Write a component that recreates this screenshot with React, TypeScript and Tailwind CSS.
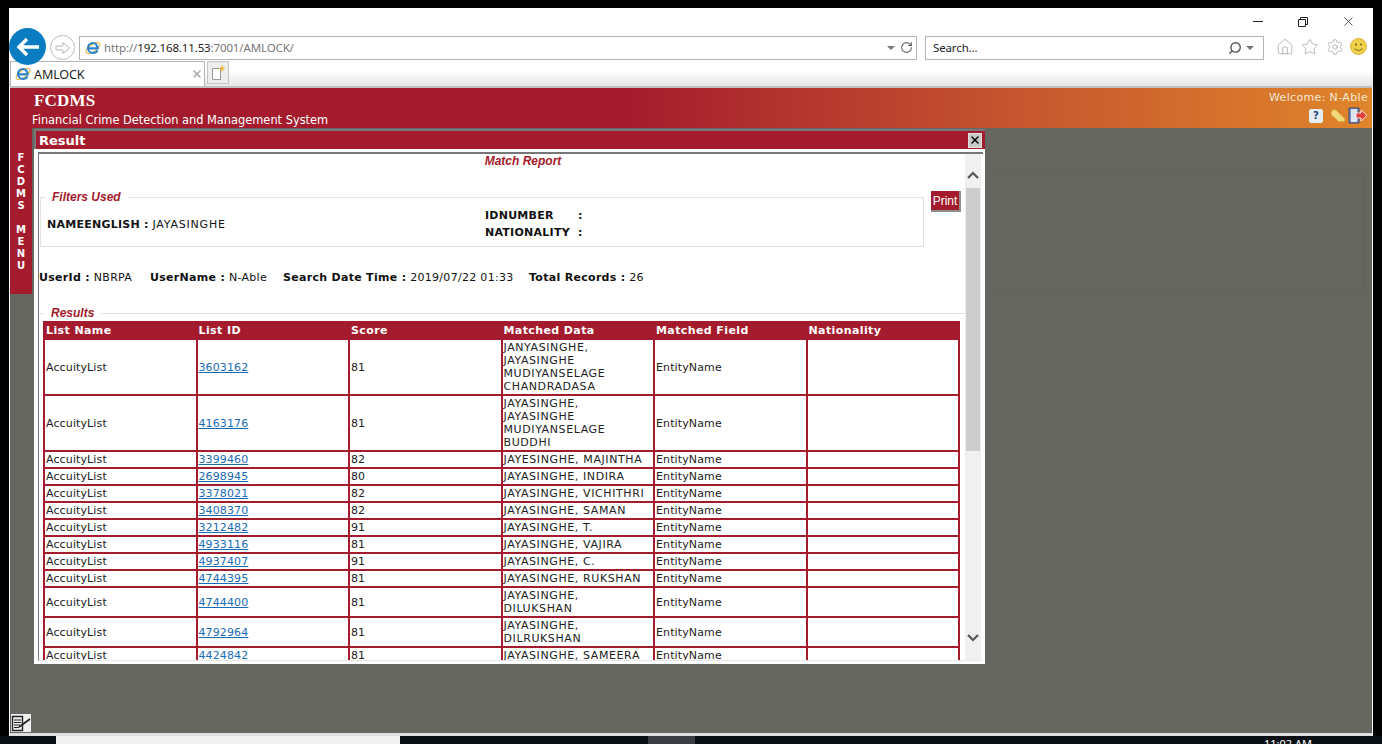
import { Home, RotateCw, Search, Settings, Star, X } from "lucide-react";

const rows: { id: string; score: string; data: string[] }[] = [
  { id: "3603162", score: "81", data: ["JANYASINGHE,", "JAYASINGHE", "MUDIYANSELAGE", "CHANDRADASA"] },
  { id: "4163176", score: "81", data: ["JAYASINGHE,", "JAYASINGHE", "MUDIYANSELAGE", "BUDDHI"] },
  { id: "3399460", score: "82", data: ["JAYESINGHE, MAJINTHA"] },
  { id: "2698945", score: "80", data: ["JAYASINGHE, INDIRA"] },
  { id: "3378021", score: "82", data: ["JAYASINGHE, VICHITHRI"] },
  { id: "3408370", score: "82", data: ["JAYASINGHE, SAMAN"] },
  { id: "3212482", score: "91", data: ["JAYASINGHE, T."] },
  { id: "4933116", score: "81", data: ["JAYASINGHE, VAJIRA"] },
  { id: "4937407", score: "91", data: ["JAYASINGHE, C."] },
  { id: "4744395", score: "81", data: ["JAYASINGHE, RUKSHAN"] },
  { id: "4744400", score: "81", data: ["JAYASINGHE,", "DILUKSHAN"] },
  { id: "4792964", score: "81", data: ["JAYASINGHE,", "DILRUKSHAN"] },
  { id: "4424842", score: "81", data: ["JAYASINGHE, SAMEERA"] },
];

const headers = ["List Name", "List ID", "Score", "Matched Data", "Matched Field", "Nationality"];

function IeLogo({ size = 16 }: { size?: number }) {
  return (
    <svg width={size} height={size} viewBox="0 0 16 16" className="shrink-0">
      <ellipse cx="8" cy="8" rx="8" ry="3.6" transform="rotate(-35 8 8)" fill="none" stroke="#e8b33a" strokeWidth="1.1" />
      <path
        d="M3.2 8.400h9.400c0-3.300-2-5.400-4.600-5.400C5.200 3 3 5.200 3 8s2.200 5 5.100 5c2 0 3.600-1 4.300-2.600"
        fill="none"
        stroke="#2b84c9"
        strokeWidth="2.200"
      />
    </svg>
  );
}

function Caret() {
  return <div className="h-0 w-0 border-x-[4px] border-t-[4px] border-x-transparent border-t-[#777]" />;
}

function CaptionButtons() {
  return (
    <div className="flex h-[26px] shrink-0 items-center justify-end pr-[17px] pt-[1px]">
      <div className="h-[1px] w-[10px] bg-[#222]" />
      <svg width="10" height="10" viewBox="0 0 10 10" className="ml-[35px]" fill="none" stroke="#222">
        <path d="M.5 2.500h7v7h-7zM2.500 2.500v-2h7v7h-2" />
      </svg>
      <X size={15} strokeWidth={1.2} className="ml-[33px] text-[#222]" />
    </div>
  );
}

function AddressRow() {
  return (
    <div className="flex h-[27px] shrink-0 items-center">
      <div className="relative z-10 -my-[6px] flex h-[37px] w-[37px] shrink-0 -translate-y-[1px] items-center justify-center rounded-full bg-[#0a7cc1]">
        <svg width="24" height="20" viewBox="0 0 24 20" fill="none" stroke="#fff" strokeWidth="3.400">
          <path d="M11 2 3 10l8 8M3 10h20" />
        </svg>
      </div>
      <div className="ml-[4px] flex h-[25px] w-[25px] shrink-0 items-center justify-center rounded-full border border-[#bdbdbd]">
        <svg width="16" height="14" viewBox="0 0 16 14" fill="none" stroke="#b5b5b5" strokeWidth="1">
          <path d="M1 5h7V1.500L14.500 7 8 12.500V9H1z" />
        </svg>
      </div>
      <div className="ml-[4px] flex h-[24px] w-[838px] shrink-0 items-center border border-[#b4b4b4] pl-[5px] pr-[3px] text-[11.5px] tracking-[-0.13px]">
        <IeLogo />
        <span className="ml-[3px] text-[#777]">
          http://<span className="text-[#222]">192.168.11.53</span>:7001/AMLOCK/
        </span>
        <div className="ml-auto flex items-center">
          <Caret />
          <RotateCw size={13} strokeWidth={2} className="ml-[5px] text-[#666]" />
        </div>
      </div>
      <div className="ml-[8px] flex h-[24px] w-[339px] shrink-0 items-center border border-[#b4b4b4] pl-[7px] pr-[9px] text-[11.5px] tracking-[-0.13px] text-[#222]">
        Search...
        <Search size={14} strokeWidth={2.400} className="ml-auto -scale-x-100 text-[#555]" />
        <div className="ml-[4px]">
          <Caret />
        </div>
      </div>
      <div className="ml-[12px] flex -translate-y-[1px] items-center gap-[7px] text-[#a0a0a0]">
        <Home size={18} strokeWidth={1} />
        <Star size={18} strokeWidth={1} />
        <Settings size={18} strokeWidth={1} />
        <svg width="17" height="17" viewBox="0 0 17 17" className="ml-[-1px]">
          <circle cx="8.500" cy="8.500" r="8" fill="#f0cf4a" stroke="#d9b23c" />
          <circle cx="6" cy="6.500" r="1" fill="#6e5a16" />
          <circle cx="11" cy="6.500" r="1" fill="#6e5a16" />
          <path d="M4.500 10.500c1.500 2.400 6.500 2.400 8 0" fill="none" stroke="#6e5a16" />
        </svg>
      </div>
    </div>
  );
}

function TabRow() {
  return (
    <div className="flex h-[25px] shrink-0 bg-gradient-to-b from-white from-40% to-[#e6e6e6] pl-[1px]">
      <div className="flex h-[25px] w-[195px] items-center border border-b-0 border-[#b4b4b4] bg-white pl-[4px] pr-[1px] text-[12.5px] tracking-[-0.1px] text-[#222]">
        <IeLogo />
        <span className="ml-[3px] translate-y-[1px]">AMLOCK</span>
        <X size={12} strokeWidth={3} className="ml-auto text-[#a5a5a5]" />
      </div>
      <div className="ml-[2px] flex h-[23px] w-[22px] items-center justify-center border border-[#c4c4c4] bg-[#ededed]">
        <svg width="16" height="16" viewBox="0 0 16 16">
          <path d="M2.500 3.500h8v11h-8z" fill="#fff" stroke="#999" />
          <path d="M12 0l1 2.500 2.500 1-2.500 1-1 2.500-1-2.500-2.500-1 2.500-1z" fill="#f2b431" />
        </svg>
      </div>
    </div>
  );
}

function TopBanner() {
  return (
    <div className="flex h-[40px] shrink-0 bg-[linear-gradient(to_right,#a41b2d_0%,#a41b2d_45%,#c4522f_72%,#e0852b_100%)] font-['DejaVu_Sans',sans-serif] text-white">
      <div className="pl-[22px]">
        <div className="ml-[2px] h-[25px] pt-[2px] font-['Liberation_Serif',serif] text-[17px] font-bold leading-[22px] tracking-[0.2px]">FCDMS</div>
        <div className="text-[11.4px] leading-[14px]">Financial Crime Detection and Management System</div>
      </div>
      <div className="ml-auto flex flex-col items-end pr-[4px]">
        <div className="text-[11px] leading-[20px] tracking-[0.35px] text-[#f4e8d4]">Welcome: N-Able</div>
        <div className="-mt-[1px] flex items-center">
          <div className="flex h-[14px] w-[14px] items-center justify-center rounded-[2px] bg-[#e4eef8] text-[10px] font-bold leading-none text-[#1c3f7a]">?</div>
          <svg width="16" height="16" viewBox="0 0 16 16" className="ml-[7px]">
            <path d="M1 4l3-3 3 2 8 8-1 3-2-1-1 1-1-1-1 1-5-5-2-1z" fill="#f0d878" stroke="#d6a832" strokeWidth=".8" />
          </svg>
          <svg width="20" height="17" viewBox="0 0 20 17" className="ml-[2px]">
            <path d="M1 1h10v15H1z" fill="#7d8fc0" stroke="#39456f" />
            <path d="M3 2h6v13H3z" fill="#dfe4f2" />
            <path d="M8 6h5V3l6 5.500-6 5.500v-3H8z" fill="#e2403a" stroke="#fff" strokeWidth=".8" />
          </svg>
        </div>
      </div>
    </div>
  );
}

function SideMenu() {
  const letters = ["F", "C", "D", "M", "S", "\u00a0", "M", "E", "N", "U"];
  return (
    <div className="flex h-[166px] w-[22px] shrink-0 flex-col items-center bg-[#a41b2d] pt-[24px] text-[10px] font-bold leading-[12px] text-white">
      {letters.map((l, i) => (
        <span key={i}>{l}</span>
      ))}
    </div>
  );
}

function Scrollbar() {
  return (
    <div className="flex w-[16px] shrink-0 flex-col items-center bg-[#f0f0f0]">
      <svg width="12" height="8" viewBox="0 0 12 8" className="mb-[9px] mt-[17px] shrink-0" fill="none" stroke="#555" strokeWidth="2.200">
        <path d="M1 7l5-5 5 5" />
      </svg>
      <div className="h-[263px] w-[14px] shrink-0 bg-[#cdcdcd]" />
      <svg width="12" height="8" viewBox="0 0 12 8" className="mb-[18px] mt-auto shrink-0" fill="none" stroke="#555" strokeWidth="2.200">
        <path d="M1 1l5 5 5-5" />
      </svg>
    </div>
  );
}

function ReportTable() {
  const cell = "border-2 border-[#a41b2d] px-[1px] py-[1px] align-middle font-normal";
  return (
    <table className="ml-[3px] mt-[1px] w-[917px] table-fixed border-collapse text-[11px] leading-[13px] tracking-[0.12px] text-[#222]">
      <thead>
        <tr className="bg-[#a41b2d] text-left text-white">
          {headers.map((h) => (
            <th key={h} className="border-2 border-[#a41b2d] px-[1px] py-[1px] font-bold tracking-[0.4px]">
              {h}
            </th>
          ))}
        </tr>
      </thead>
      <tbody>
        {rows.map((r) => (
          <tr key={r.id}>
            <td className={cell}>AccuityList</td>
            <td className={cell}>
              <span className="text-[#1a6bb5] underline">{r.id}</span>
            </td>
            <td className={cell}>{r.score}</td>
            <td className={cell + " tracking-[0.6px]"}>
              {r.data.map((line) => (
                <div key={line} className="whitespace-nowrap">
                  {line}
                </div>
              ))}
            </td>
            <td className={cell}>EntityName</td>
            <td className={cell}></td>
          </tr>
        ))}
      </tbody>
    </table>
  );
}

function ResultModal() {
  return (
    <div className="absolute left-[24px] top-[41px] flex h-[535px] w-[951px] flex-col border-t-2 border-[#77777a] font-['DejaVu_Sans',sans-serif]">
      <div className="flex h-[18px] shrink-0 items-center border-l-2 border-[#77777a] bg-[#a41b2d] pl-[3px] pr-[3px] text-[13px] font-bold text-white">
        <span className="translate-y-[1px]">Result</span>
        <div className="ml-auto flex h-[15px] w-[14px] items-center justify-center border border-[#e0e0e0] bg-[#c8c8c8]">
          <X size={12} strokeWidth={3} className="text-black" />
        </div>
      </div>
      <div className="flex min-h-0 flex-1 flex-col bg-white pb-[3px] pl-[4px] pr-[2px] pt-[3px]">
        <div className="flex min-h-0 flex-1 border-b border-l border-t-2 border-[#77777a] border-b-[#e6e6e6] pr-[2px]">
          <div className="min-w-0 flex-1 overflow-hidden pl-[1px]">
            <div className="h-[15px] w-[966px] text-center font-['Liberation_Sans',sans-serif] text-[12px] font-bold italic leading-[15px] text-[#a41b2d]">
              Match Report
            </div>
            <div className="mt-[21px] flex">
              <fieldset className="h-[57px] w-[884px] shrink-0 border border-[#e2e2e2] pl-[6px]">
                <legend className="ml-[-2px] px-[7px] font-['Liberation_Sans',sans-serif] text-[12px] font-bold italic leading-[14px] text-[#a41b2d]">
                  Filters Used
                </legend>
                <div className="flex text-[11px] leading-[17px] tracking-[0.25px] text-[#111]">
                  <div className="w-[438px] pt-[12px]">
                    <b>NAMEENGLISH :</b> <span className="tracking-[0.8px]">JAYASINGHE</span>
                  </div>
                  <div className="pt-[3px] font-bold">
                    <div className="flex">
                      <span className="w-[93px]">IDNUMBER</span>:
                    </div>
                    <div className="flex">
                      <span className="w-[93px]">NATIONALITY</span>:
                    </div>
                  </div>
                </div>
              </fieldset>
              <div className="ml-[7px] mt-[1px] flex h-[21px] w-[30px] items-center justify-center border-b-2 border-r-2 border-[#8f8f8f] bg-[#a41b2d] font-['Liberation_Sans',sans-serif] text-[12px] text-white">
                Print
              </div>
            </div>
            <div className="mt-[23px] flex h-[17px] items-center text-[11px] tracking-[0.3px] text-[#111]">
              <span className="-ml-[1px] w-[111px] shrink-0">
                <b>UserId :</b> NBRPA
              </span>
              <span className="w-[133px] shrink-0">
                <b>UserName :</b> N-Able
              </span>
              <span className="w-[246px] shrink-0">
                <b>Search Date Time :</b> 2019/07/22 01:33
              </span>
              <span>
                <b>Total Records :</b> 26
              </span>
            </div>
            <fieldset className="mt-[19px] w-[925px] border-t border-[#e2e2e2]">
              <legend className="ml-[4px] px-[7px] font-['Liberation_Sans',sans-serif] text-[12px] font-bold italic leading-[14px] text-[#a41b2d]">
                Results
              </legend>
              <ReportTable />
            </fieldset>
          </div>
          <Scrollbar />
        </div>
      </div>
    </div>
  );
}

function PageBody() {
  return (
    <div className="relative flex min-h-0 flex-1 flex-col bg-[#666660]">
      <TopBanner />
      <ResultModal />
      <div className="flex min-h-0 flex-1 font-['DejaVu_Sans',sans-serif]">
        <SideMenu />
        <div className="ml-[10px] mr-[8px] mt-[42px] h-[119px] flex-1 border border-[#62625c]" />
      </div>
      <div className="flex h-[18px] shrink-0 items-end pb-[1px] pl-[1px]">
        <div className="flex h-[18px] w-[20px] bg-[#efefef]">
          <svg width="20" height="18" viewBox="0 0 20 18" fill="none" stroke="#222">
            <path d="M1.500 2.500h10v14h-10z" strokeWidth="1.400" />
            <path d="M3 6h7M3 8.500h7M3 11h6M3 13.500h5" />
            <path d="M8 13 19 5" strokeWidth="1.800" />
          </svg>
        </div>
      </div>
    </div>
  );
}

function Taskbar() {
  return (
    <div className="flex h-[8px] shrink-0 overflow-hidden bg-[#0a0f15] pl-[56px]">
      <div className="w-[344px] bg-[#f1f1f1]" />
      <div className="ml-[248px] w-[47px] bg-[#3a3d42]" />
      <div className="ml-auto mr-[70px] pt-[1px] text-[11px] leading-[14px] text-white">11:02 AM</div>
    </div>
  );
}

export default function App() {
  return (
    <div className="flex h-[744px] w-[1382px] flex-col overflow-hidden bg-black pt-[8px] font-['Noto_Sans',sans-serif]">
      <div className="ml-[9px] flex h-[728px] w-[1364px] shrink-0 flex-col bg-white">
        <CaptionButtons />
        <AddressRow />
        <TabRow />
        <div className="mx-[1px] flex min-h-0 flex-1 flex-col border-b-[3px] border-t-2 border-b-[#dedede] border-t-[#bfbfbf]">
          <PageBody />
        </div>
      </div>
      <Taskbar />
    </div>
  );
}
